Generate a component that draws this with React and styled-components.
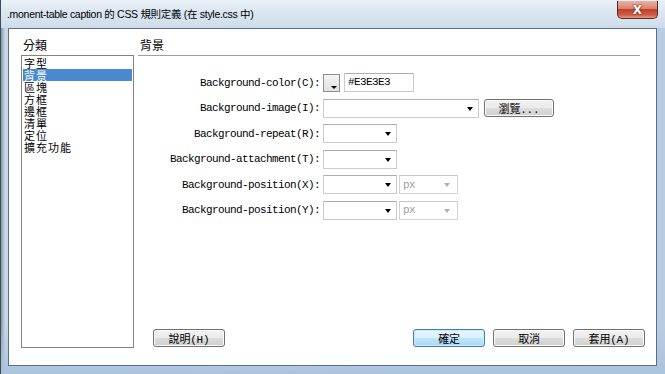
import React from "react";
import styled, { createGlobalStyle, css } from "styled-components";

const Global = createGlobalStyle`
  html, body { margin: 0; padding: 0; }
  body { width: 665px; height: 374px; overflow: hidden; background: #6e7d8c; }
  * { box-sizing: border-box; }
`;

const CJK = `"Noto Sans CJK TC", "Noto Sans CJK SC", sans-serif`;
const MONO = `"Liberation Mono", "Noto Sans CJK TC", monospace`;

const Window = styled.div`
  width: 665px;
  height: 374px;
  display: flex;
  flex-direction: column;
  background: linear-gradient(90deg, #8796a6 0px, #c9d8e8 4px, #d6e3f0 40%, #c4d6e8 75%, #b9cde2 100%);
  border-left: 1px solid #3f4a57;
`;

const TitleBar = styled.div`
  height: 28px;
  flex: none;
  display: flex;
  align-items: flex-start;
  background: linear-gradient(180deg, #e9f0f7 0%, #dbe6f1 45%, #cddcec 100%);
`;

const Title = styled.div`
  font-family: "Liberation Sans", ${CJK};
  font-size: 10.5px;
  color: #000;
  line-height: 16px;
  padding: 6px 0 0 6px;
  letter-spacing: -0.3px;
`;

const CloseButton = styled.div`
  margin-left: auto;
  margin-right: 7px;
  margin-top: 1px;
  width: 41px;
  height: 18px;
  border: 1px solid #5b2620;
  border-top: none;
  border-radius: 0 0 5px 5px;
  background: linear-gradient(180deg, #e8b1a6 0%, #d8826f 45%, #c3412c 50%, #cc5a45 80%, #e09a80 100%);
  display: flex;
  align-items: center;
  justify-content: center;
  color: #fff;
  font-family: "DejaVu Sans", sans-serif;
  font-weight: bold;
  font-size: 12px;
  text-shadow: 0 0 2px #6a1c12, 0 0 1px #6a1c12;
`;

const Frame = styled.div`
  flex: 1;
  display: flex;
  padding: 0 8px 8px 7px;
  background: linear-gradient(180deg, transparent 85%, #aac4dc 100%);
`;

const Client = styled.div`
  flex: 1;
  display: flex;
  background: #fff;
  border: 1px solid #5d6f84;
  padding: 9px 0 17px 12px;
`;

const LeftCol = styled.div`
  width: 113px;
  display: flex;
  flex-direction: column;
`;

const SectionLabel = styled.div`
  font-family: ${CJK};
  font-size: 12px;
  line-height: 14px;
  height: 14px;
  padding-left: 2px;
  color: #000;
`;

const ListBox = styled.div`
  margin-top: 3px;
  flex: 1;
  border: 1px solid #828282;
  padding: 1px;
  display: flex;
  flex-direction: column;
`;

const ListItem = styled.div`
  height: 12px;
  line-height: 12px;
  font-family: ${CJK};
  font-size: 11px;
  letter-spacing: 1px;
  padding-left: 1px;
  color: ${(p) => (p.$selected ? "#fff" : "#000")};
  background: ${(p) => (p.$selected ? "#4a89cf" : "transparent")};
`;

const RightCol = styled.div`
  flex: 1;
  margin-left: 4px;
  display: flex;
  flex-direction: column;
`;

const Header = styled.div`
  margin-right: 16px;
  height: 18px;
  border-bottom: 1px solid #a0a0a0;
`;

const Form = styled.div`
  margin-top: 17px;
  display: grid;
  grid-template-columns: 182px auto;
  grid-auto-rows: 19px;
  column-gap: 3px;
  row-gap: 6.5px;
  align-items: center;
`;

const Label = styled.div`
  font-family: ${MONO};
  font-size: 11px;
  letter-spacing: -0.6px;
  text-align: right;
  color: #000;
  white-space: nowrap;
`;

const Controls = styled.div`
  display: flex;
  align-items: center;
  gap: ${(p) => p.$gap || 0}px;
`;

const Swatch = styled.div`
  width: 17px;
  height: 18px;
  border: 1px solid #8e8f8f;
  background: linear-gradient(180deg, #f4f4f4, #e1e1e1);
  position: relative;
  &::after {
    content: "";
    position: absolute;
    right: 2px;
    bottom: 2px;
    border-left: 3px solid transparent;
    border-right: 3px solid transparent;
    border-top: 3px solid #000;
  }
`;

const TextBox = styled.div`
  width: 70px;
  height: 19px;
  border: 1px solid #c8ccd1;
  border-top-color: #abadb3;
  background: #fff;
  font-family: ${MONO};
  font-size: 11px;
  letter-spacing: -0.6px;
  line-height: 17px;
  padding-left: 3px;
  color: #000;
`;

const Select = styled.div`
  width: ${(p) => p.$w}px;
  height: 19px;
  border: 1px solid ${(p) => (p.$disabled ? "#d2d4d6" : "#c8ccd1")};
  border-top-color: ${(p) => (p.$disabled ? "#c5c7c9" : "#abadb3")};
  background: #fff;
  display: flex;
  align-items: center;
  font-family: ${MONO};
  font-size: 11px;
  letter-spacing: -0.6px;
  color: ${(p) => (p.$disabled ? "#a0a0a0" : "#000")};
  padding-left: 3px;
  &::after {
    content: "";
    margin-left: auto;
    margin-right: ${(p) => (p.$disabled ? 7 : 5)}px;
    margin-top: 1px;
    border-left: 3.5px solid transparent;
    border-right: 3.5px solid transparent;
    border-top: 4px solid ${(p) => (p.$disabled ? "#b0b0b0" : "#000")};
  }
`;

const buttonBase = css`
  width: 72px;
  height: 18px;
  border: 1px solid #707070;
  border-radius: 3px;
  background: linear-gradient(180deg, #f2f2f2 0%, #ebebeb 48%, #dddddd 52%, #cfcfcf 100%);
  box-shadow: inset 0 0 0 1px #fbfbfb;
  display: flex;
  align-items: center;
  justify-content: center;
  font-family: ${MONO};
  font-size: 11px;
  letter-spacing: -0.2px;
  color: #000;
`;

const Button = styled.div`
  ${buttonBase}
  ${(p) =>
    p.$default &&
    css`
      border-color: #3c7fb1;
      background: linear-gradient(180deg, #eaf6fd 0%, #d9f0fc 48%, #bee6fd 52%, #a7d9f5 100%);
      box-shadow: inset 0 0 0 1px #cdeaf9;
    `}
  ${(p) => p.$w && css`width: ${p.$w}px;`}
`;

const Spacer = styled.div`
  flex: 1;
`;

const Footer = styled.div`
  display: flex;
  align-items: center;
  padding-left: 15px;
  padding-right: 11px;
  margin-bottom: 1px;
  gap: 8px;
`;

const FooterRight = styled.div`
  margin-left: auto;
  display: flex;
  gap: 8px;
`;

const categories = ["字型", "背景", "區塊", "方框", "邊框", "清單", "定位", "擴充功能"];

export default function App() {
  return (
    <>
      <Global />
      <Window>
        <TitleBar>
          <Title>.monent-table caption 的 CSS 規則定義 (在 style.css 中)</Title>
          <CloseButton>X</CloseButton>
        </TitleBar>
        <Frame>
          <Client>
            <LeftCol>
              <SectionLabel>分類</SectionLabel>
              <ListBox>
                {categories.map((c) => (
                  <ListItem key={c} $selected={c === "背景"}>
                    {c}
                  </ListItem>
                ))}
              </ListBox>
            </LeftCol>
            <RightCol>
              <Header>
                <SectionLabel>背景</SectionLabel>
              </Header>
              <Form>
                <Label>Background-color(C):</Label>
                <Controls $gap={4}>
                  <Swatch />
                  <TextBox>#E3E3E3</TextBox>
                </Controls>

                <Label>Background-image(I):</Label>
                <Controls $gap={5}>
                  <Select $w={156} />
                  <Button $w={70}>瀏覽...</Button>
                </Controls>

                <Label>Background-repeat(R):</Label>
                <Controls>
                  <Select $w={74} />
                </Controls>

                <Label>Background-attachment(T):</Label>
                <Controls>
                  <Select $w={74} />
                </Controls>

                <Label>Background-position(X):</Label>
                <Controls $gap={2}>
                  <Select $w={74} />
                  <Select $w={59} $disabled>px</Select>
                </Controls>

                <Label>Background-position(Y):</Label>
                <Controls $gap={2}>
                  <Select $w={74} />
                  <Select $w={59} $disabled>px</Select>
                </Controls>
              </Form>
              <Spacer />
              <Footer>
                <Button>說明(H)</Button>
                <FooterRight>
                  <Button $default>確定</Button>
                  <Button>取消</Button>
                  <Button>套用(A)</Button>
                </FooterRight>
              </Footer>
            </RightCol>
          </Client>
        </Frame>
      </Window>
    </>
  );
}
